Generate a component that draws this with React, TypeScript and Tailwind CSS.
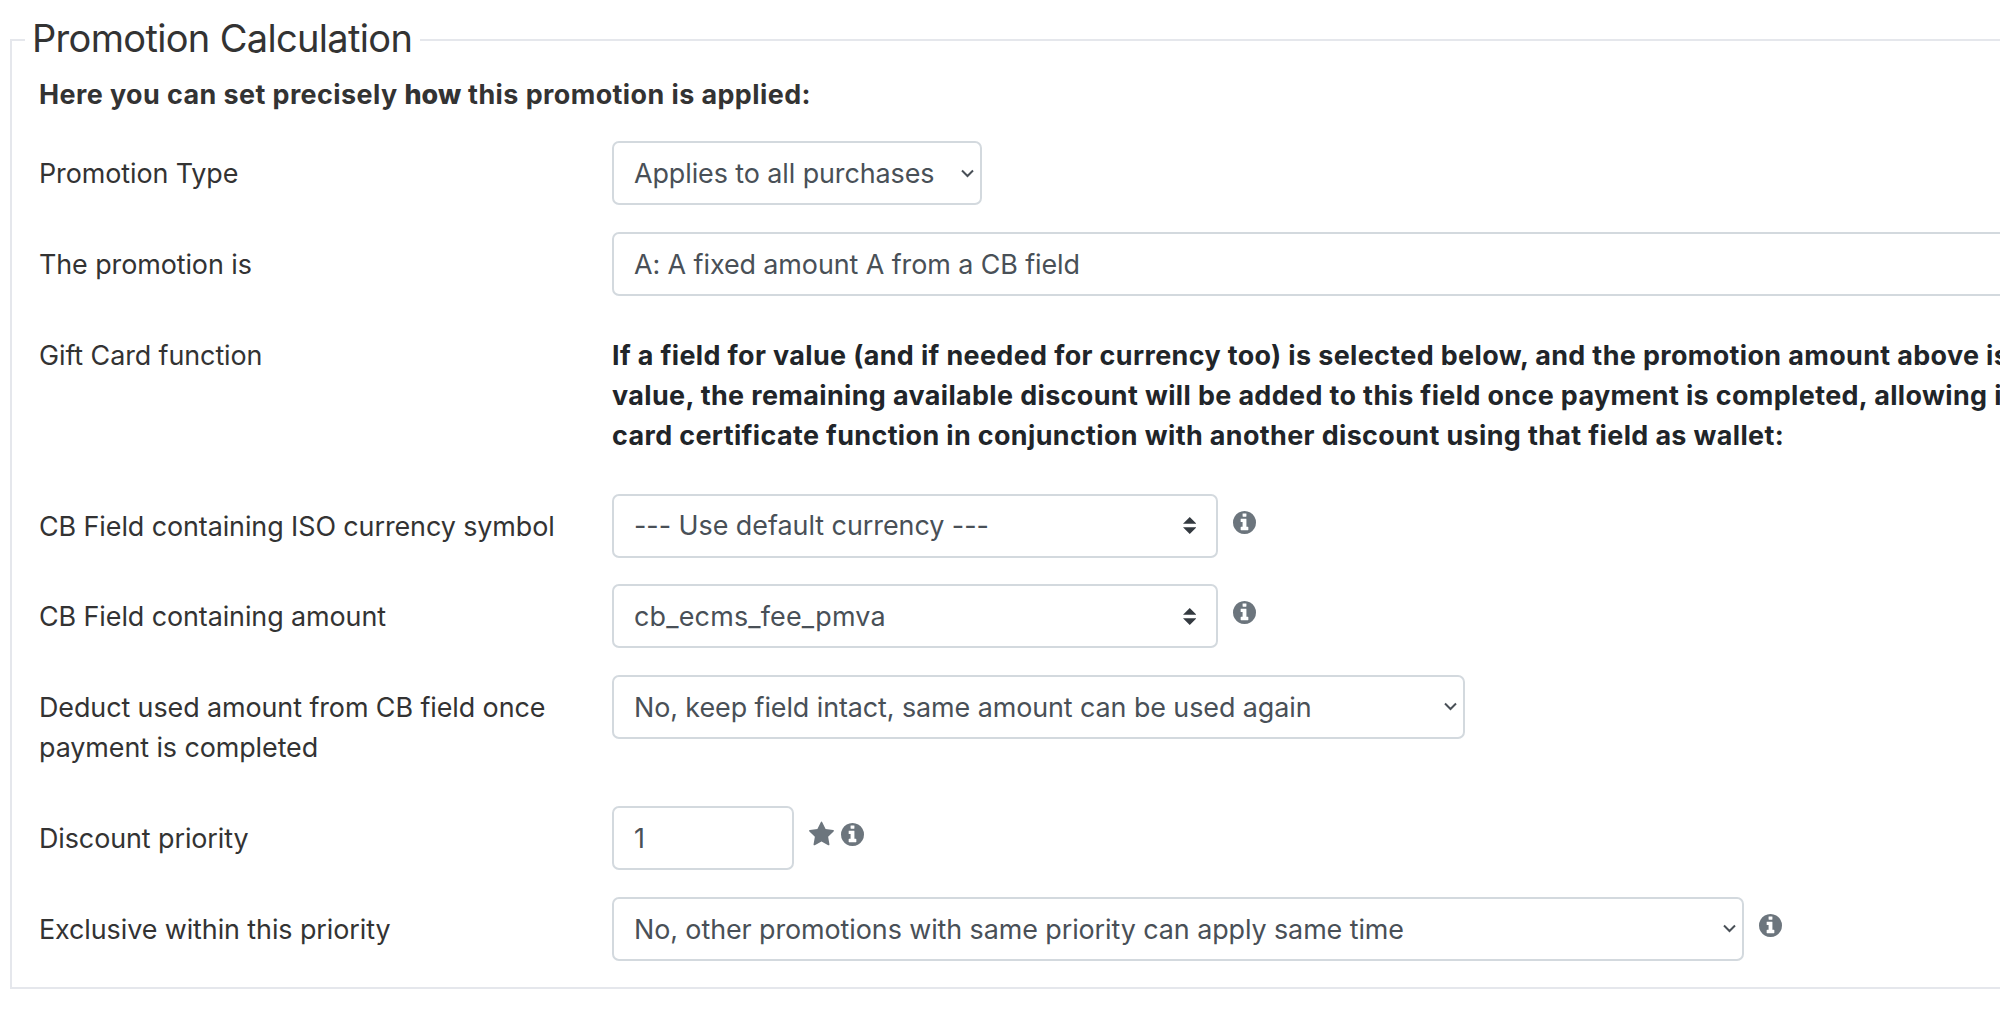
import React from 'react';

interface RowProps {
  label: React.ReactNode;
  className?: string;
  children: React.ReactNode;
}

const Row: React.FC<RowProps> = ({ label, className = 'h-[90.7px]', children }) => (
  <div className={`flex items-start ${className}`}>
    <label className="w-[573px] shrink-0 pt-[12px] pr-[40px] tracking-[-0.08px] text-[#333333]">{label}</label>
    {children}
  </div>
);

interface FieldProps {
  value: string;
  width: string;
  arrow?: 'chevron' | 'sort';
  tracking?: string;
}

const Field: React.FC<FieldProps> = ({ value, width, arrow, tracking = 'tracking-[-0.08px]' }) => (
  <div
    className={`flex h-[64px] shrink-0 items-center justify-between rounded-[7px] border-2 border-[#d3d9de] bg-white pl-[20px] text-[#495057] ${width} ${
      arrow === 'sort' ? 'pr-[20px]' : 'pr-[6px]'
    }`}
  >
    <span className={`whitespace-nowrap ${tracking}`}>{value}</span>
    {arrow === 'chevron' && (
      <svg className="h-[9px] w-[13px]" viewBox="0 0 13 9" fill="none">
        <path d="M1 1.5L6.5 7L12 1.5" stroke="#495057" strokeWidth="2" />
      </svg>
    )}
    {arrow === 'sort' && (
      <svg className="h-[17px] w-[13.5px]" viewBox="0 0 4 5">
        <path fill="#343a40" d="M2 0L0 2h4zm0 5L0 3h4z" />
      </svg>
    )}
  </div>
);

const Info = () => (
  <svg className="size-[23px] fill-[#6c757d]" viewBox="128 128 1536 1536" aria-label="Info">
    <path d="M1152 1376v-160q0-14-9-23t-23-9h-96v-512q0-14-9-23t-23-9h-320q-14 0-23 9t-9 23v160q0 14 9 23t23 9h96v320h-96q-14 0-23 9t-9 23v160q0 14 9 23t23 9h448q14 0 23-9t9-23zm-128-896v-160q0-14-9-23t-23-9h-192q-14 0-23 9t-9 23v160q0 14 9 23t23 9h192q14 0 23-9t9-23zm640 416q0 209-103 385.500t-279.500 279.500-385.500 103-385.500-103-279.500-279.500-103-385.500 103-385.500 279.500-279.500 385.500-103 385.500 103 279.500 279.500 103 385.500z" />
  </svg>
);

const Star = () => (
  <svg className="h-[23px] w-[25px] overflow-visible fill-[#6c757d]" viewBox="64 128 1664 1536" aria-label="Required">
    <path d="M1728 647q0 22-26 48l-363 354 86 500q1 7 1 20 0 21-10.500 35.500t-30.500 14.500q-19 0-40-12l-449-236-449 236q-22 12-40 12-21 0-31.500-14.500t-10.500-35.500q0-6 2-20l86-500-364-354q-25-27-25-48 0-37 56-46l502-73 225-455q19-41 49-41t49 41l225 455 502 73q56 9 56 46z" />
  </svg>
);

const Icons: React.FC<{ children: React.ReactNode }> = ({ children }) => (
  <div className="flex gap-[7px] pt-[17px] pl-[14.5px]">{children}</div>
);

const App: React.FC = () => {
  return (
    <div className="h-[1014px] w-full overflow-hidden bg-white pt-[17px] pl-[10px] font-['Inter','Liberation_Sans',sans-serif] text-[26.9px] leading-[40.35px]">
      <fieldset className="h-[972px] w-[2100px] border-2 border-[#e5e7ec] pl-[27px]">
        <legend className="-ml-[14px] pr-[8px] pb-[4px] pl-[7px] text-[38px] leading-[42px] tracking-[-0.67px] text-[#333333]">
          Promotion Calculation
        </legend>

        <p className="mt-[11px] mb-[27px] font-bold tracking-[0.43px] text-[#333333]">
          Here you can set precisely <strong className="font-extrabold tracking-[0.1px]">how</strong> this promotion is
          applied:
        </p>

        <Row label="Promotion Type">
          <Field value="Applies to all purchases" width="w-[370px]" arrow="chevron" />
        </Row>

        <Row label="The promotion is">
          <Field value="A: A fixed amount A from a CB field" width="w-[1480px]" />
        </Row>

        <Row label="Gift Card function" className="h-[170.9px]">
          <p className="pt-[12px] font-bold tracking-[0.38px] whitespace-nowrap text-[#212529]">
            If a field for value (and if needed for currency too) is selected below, and the promotion amount above is
            <br />
            value, the remaining available discount will be added to this field once payment is completed, allowing it
            <br />
            card certificate function in conjunction with another discount using that field as wallet:
          </p>
        </Row>

        <Row label="CB Field containing ISO currency symbol">
          <Field value="--- Use default currency ---" width="w-[606px]" arrow="sort" tracking="tracking-[-0.03px]" />
          <Icons>
            <Info />
          </Icons>
        </Row>

        <Row label="CB Field containing amount">
          <Field value="cb_ecms_fee_pmva" width="w-[606px]" arrow="sort" tracking="tracking-[0.2px]" />
          <Icons>
            <Info />
          </Icons>
        </Row>

        <Row label="Deduct used amount from CB field once payment is completed" className="h-[131px]">
          <Field value="No, keep field intact, same amount can be used again" width="w-[853px]" arrow="chevron" />
        </Row>

        <Row label="Discount priority">
          <Field value="1" width="w-[182px]" />
          <Icons>
            <Star />
            <Info />
          </Icons>
        </Row>

        <Row label="Exclusive within this priority">
          <Field
            value="No, other promotions with same priority can apply same time"
            width="w-[1132px]"
            arrow="chevron"
          />
          <Icons>
            <Info />
          </Icons>
        </Row>
      </fieldset>
    </div>
  );
};

export default App;
